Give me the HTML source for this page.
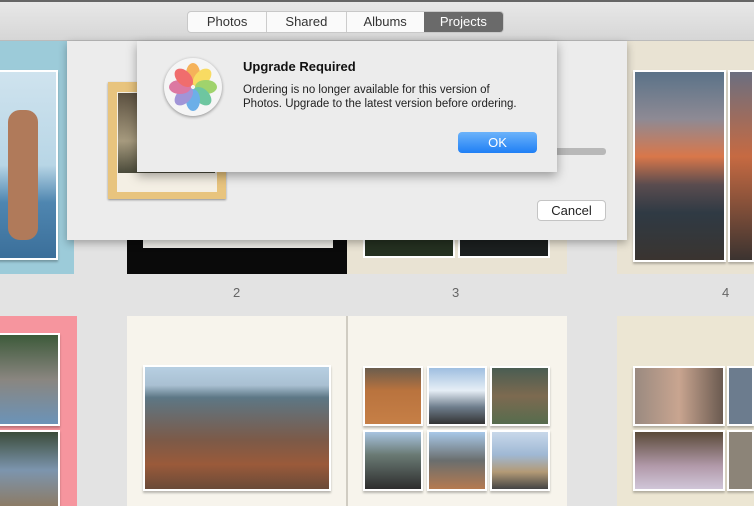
<!DOCTYPE html><html><head><style>
html,body{margin:0;width:754px;height:506px;overflow:hidden}
body{background:#e3e3e3;font-family:"Liberation Sans",sans-serif;position:relative}
div{position:absolute;box-sizing:border-box}
.ph{border:2px solid #fff;box-shadow:0 2px 2px rgba(0,0,0,.25)}
.lbl{font-size:13px;color:#666;top:285px}
</style></head><body>
<div style="left:0;top:0;width:754px;height:506px;overflow:hidden">
<div style="left:0;top:41px;width:74px;height:233px;background:#9ccbd9"></div>
<div class="ph" style="left:-2px;top:70px;width:60px;height:190px;background:linear-gradient(#cfe3ee 0,#b8d6e6 50%,#4f86b0 70%,#3b6f9a);"></div>
<div style="left:8px;top:110px;width:30px;height:130px;background:#b07a5a;border-radius:12px"></div>
<div style="left:127px;top:41px;width:220px;height:233px;background:#0a0a0a"></div>
<div style="left:143px;top:230px;width:190px;height:18px;background:#ecebe6;font-size:5px;color:#555;text-align:center;padding-top:5px">"Sunsets are proof that endings can be beautiful too"</div>
<div style="left:347px;top:41px;width:220px;height:233px;background:#e9e3d3"></div>
<div style="left:363px;top:230px;width:92px;height:28px;background:#243020;border:2px solid #fff"></div>
<div style="left:458px;top:230px;width:92px;height:28px;background:#1b1f1f;border:2px solid #fff"></div>
<div style="left:617px;top:41px;width:137px;height:233px;background:#e9e3d3"></div>
<div class="ph" style="left:633px;top:70px;width:93px;height:192px;background:linear-gradient(#5a7288 0,#8e8a94 25%,#d9774a 45%,#5a4c4f 60%,#2f3a44 75%,#3a3430)"></div>
<div class="ph" style="left:728px;top:70px;width:26px;height:192px;background:linear-gradient(#6b6f80,#c66a42 45%,#3b3330)"></div>
<div class="lbl" style="left:233px">2</div>
<div class="lbl" style="left:452px">3</div>
<div class="lbl" style="left:722px">4</div>
<div style="left:0;top:316px;width:77px;height:190px;background:#f6959e"></div>
<div class="ph" style="left:-2px;top:333px;width:62px;height:93px;background:linear-gradient(#3d5a3a,#8a8680 50%,#6b93b8)"></div>
<div class="ph" style="left:-2px;top:430px;width:62px;height:80px;background:linear-gradient(#3b4c3a,#7c95ae 50%,#8d7a62)"></div>
<div style="left:127px;top:316px;width:440px;height:190px;background:#f7f4ec"></div>
<div style="left:346px;top:316px;width:2px;height:190px;background:#d0ccc2"></div>
<div class="ph" style="left:143px;top:365px;width:188px;height:126px;background:linear-gradient(#b7cfe2 0,#a9c0d2 15%,#5d7785 25%,#7c5a48 60%,#9a5a3a 80%,#6a4a38)"></div>
<div class="ph" style="left:363px;top:366px;width:60px;height:60px;background:linear-gradient(#6b5d4e,#b9733e 40%,#c67f46)"></div>
<div class="ph" style="left:427px;top:366px;width:60px;height:60px;background:linear-gradient(#9fbfe0,#e6eef6 40%,#6e7d8c 70%,#333)"></div>
<div class="ph" style="left:490px;top:366px;width:60px;height:60px;background:linear-gradient(#4a5d52,#7d6a50 50%,#566c4e)"></div>
<div class="ph" style="left:363px;top:430px;width:60px;height:61px;background:linear-gradient(#a8c4e0,#6a7a74 40%,#2d2d2d)"></div>
<div class="ph" style="left:427px;top:430px;width:60px;height:61px;background:linear-gradient(#a8c8e8,#6a6e6e 50%,#b57a50)"></div>
<div class="ph" style="left:490px;top:430px;width:60px;height:61px;background:linear-gradient(#c8d8ea,#9fb8d4 40%,#b39a76 70%,#444)"></div>
<div style="left:617px;top:316px;width:137px;height:190px;background:#ece6d3"></div>
<div class="ph" style="left:633px;top:366px;width:92px;height:60px;background:linear-gradient(90deg,#9a8a80,#c9a590 50%,#6a5a50)"></div>
<div class="ph" style="left:727px;top:366px;width:27px;height:60px;background:#6c7c8e"></div>
<div class="ph" style="left:633px;top:430px;width:92px;height:61px;background:linear-gradient(#5a4a38,#b29aaa 60%,#d0c6d8)"></div>
<div class="ph" style="left:727px;top:430px;width:27px;height:61px;background:#8c8478"></div>
<div style="left:0;top:0;width:754px;height:41px;background:linear-gradient(#e8e8e8,#d6d6d6);border-top:2px solid #666;border-bottom:1px solid #bbb"></div>
<div style="left:187px;top:11px;width:317px;height:22px;border-radius:4px;background:#fafafa;border:1px solid #c8c8c8;display:flex;font-size:13px;color:#333;overflow:hidden">
<span style="width:79px;text-align:center;line-height:20px;border-right:1px solid #ccc">Photos</span>
<span style="width:79px;text-align:center;line-height:20px;border-right:1px solid #ccc">Shared</span>
<span style="width:78px;text-align:center;line-height:20px">Albums</span>
<span style="width:80px;text-align:center;line-height:20px;background:#6a6a6a;color:#fff">Projects</span></div>
<div style="left:67px;top:41px;width:560px;height:199px;background:#ececec;box-shadow:0 3px 8px rgba(0,0,0,.3)"></div>
<div style="left:108px;top:82px;width:118px;height:117px;background:#e8c47e;box-shadow:0 1px 2px rgba(0,0,0,.4)"></div>
<div style="left:117px;top:92px;width:100px;height:100px;background:#f4efe4"></div>
<div style="left:118px;top:93px;width:97px;height:80px;background:linear-gradient(#5b5040,#a69a7e 60%,#4a4a3a)"></div>
<div style="left:545px;top:148px;width:61px;height:7px;background:#b8b8b8;border-radius:3px"></div>
<div style="left:537px;top:200px;width:69px;height:21px;background:#fff;border:1px solid #c4c4c4;border-radius:4px;font-size:13px;text-align:center;line-height:19px;color:#222">Cancel</div>
<div style="left:137px;top:41px;width:420px;height:131px;background:#ececec;box-shadow:0 4px 10px rgba(0,0,0,.35)"></div>
<div style="left:164px;top:58px;width:58px;height:58px;border-radius:50%;background:#f5f5f5;box-shadow:0 1px 3px rgba(0,0,0,.4)">
<svg width="58" height="58" viewBox="-29 -29 58 58"><g opacity=".8">
<ellipse cx="0" cy="-13" rx="7" ry="11" fill="#f6a234"/>
<ellipse cx="0" cy="-13" rx="7" ry="11" fill="#f9d53e" transform="rotate(45)"/>
<ellipse cx="0" cy="-13" rx="7" ry="11" fill="#8bcb4a" transform="rotate(90)"/>
<ellipse cx="0" cy="-13" rx="7" ry="11" fill="#4dbb8c" transform="rotate(135)"/>
<ellipse cx="0" cy="-13" rx="7" ry="11" fill="#4a9ee6" transform="rotate(180)"/>
<ellipse cx="0" cy="-13" rx="7" ry="11" fill="#8d7ed0" transform="rotate(225)"/>
<ellipse cx="0" cy="-13" rx="7" ry="11" fill="#d7598e" transform="rotate(270)"/>
<ellipse cx="0" cy="-13" rx="7" ry="11" fill="#ef4c4c" transform="rotate(315)"/></g></svg></div>
<div style="left:243px;top:59px;font-size:13px;font-weight:bold;color:#111">Upgrade Required</div>
<div style="left:243px;top:83px;font-size:11.5px;line-height:14px;color:#222;width:310px">Ordering is no longer available for this version of<br>Photos. Upgrade to the latest version before ordering.</div>
<div style="left:458px;top:132px;width:79px;height:21px;border-radius:4px;background:linear-gradient(#6cb3fa,#1f7ff5);color:#fff;font-size:13px;text-align:center;line-height:21px">OK</div>
</div>
</body></html>
